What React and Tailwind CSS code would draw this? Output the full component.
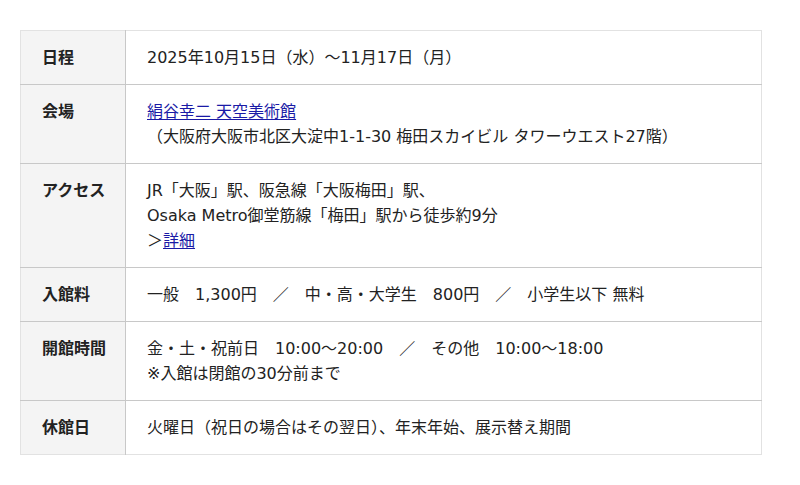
import React from 'react';

const ROWS = [
  {
    label: '日程',
    lines: ['2025年10月15日（水）〜11月17日（月）'],
  },
  {
    label: '会場',
    lines: [
      <a href="#" className="text-[#1a1aa6] underline underline-offset-2">
        絹谷幸二 天空美術館
      </a>,
      '（大阪府大阪市北区大淀中1-1-30 梅田スカイビル タワーウエスト27階）',
    ],
  },
  {
    label: 'アクセス',
    lines: [
      'JR「大阪」駅、阪急線「大阪梅田」駅、',
      'Osaka Metro御堂筋線「梅田」駅から徒歩約9分',
      <>
        ＞
        <a href="#" className="text-[#1a1aa6] underline underline-offset-2">
          詳細
        </a>
      </>,
    ],
  },
  {
    label: '入館料',
    lines: ['一般　1,300円　／　中・高・大学生　800円　／　小学生以下 無料'],
  },
  {
    label: '開館時間',
    lines: ['金・土・祝前日　10:00〜20:00　／　その他　10:00〜18:00', '※入館は閉館の30分前まで'],
  },
  {
    label: '休館日',
    lines: ['火曜日（祝日の場合はその翌日）、年末年始、展示替え期間'],
  },
];

export default function App() {
  return (
    <div
      className="min-h-screen bg-white pt-[30px] px-5 text-[16px] leading-[25px] text-[#222]"
      style={{ fontFamily: '"DejaVu Sans", "Noto Sans CJK JP", sans-serif' }}
    >
      <table className="w-[742px] border-collapse border border-[#e2e2e2]">
        <tbody>
          {ROWS.map((row, i) => (
            <tr key={i} className={i > 0 ? 'border-t border-[#c8c8c8]' : ''}>
              <th className="w-[105px] bg-[#f4f4f4] border-r border-[#c8c8c8] pl-[21px] py-[14px] text-left align-top font-bold">
                {row.label}
              </th>
              <td className="pl-[21px] pr-4 py-[14px] align-top">
                {row.lines.map((line, j) => (
                  <div key={j}>{line}</div>
                ))}
              </td>
            </tr>
          ))}
        </tbody>
      </table>
    </div>
  );
}
